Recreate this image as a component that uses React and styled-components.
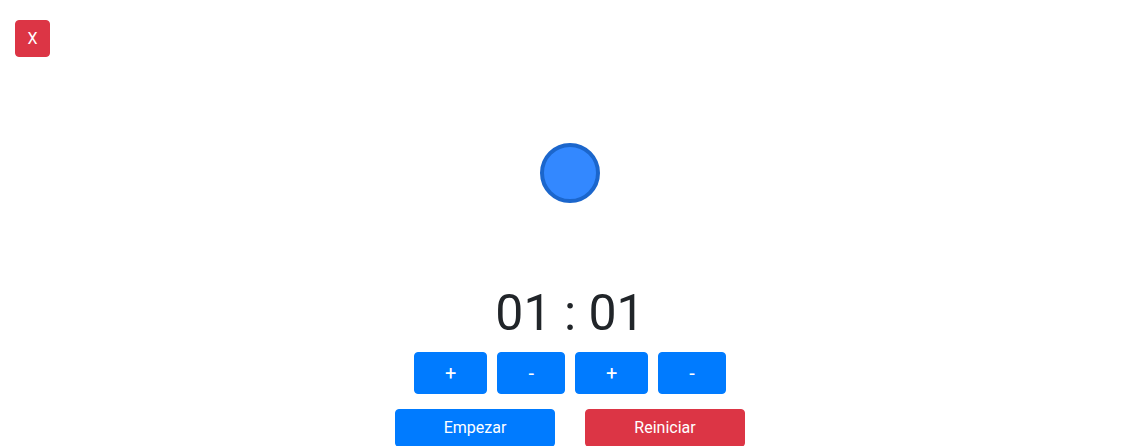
import React from "react";
import styled, { createGlobalStyle } from "styled-components";

const Global = createGlobalStyle`
  html, body { margin: 0; padding: 0; background: #fff; }
  body { font-family: Roboto, "Liberation Sans", Arial, sans-serif; color: #212529; }
`;

const Page = styled.div`
  width: 1140px;
  height: 446px;
  overflow: hidden;
  padding: 20px 15px 0;
  box-sizing: border-box;
  display: flex;
  flex-direction: column;
`;

const Btn = styled.button`
  font-family: Roboto, "Liberation Sans", Arial, sans-serif;
  border: 1px solid ${(p) => (p.$variant === "danger" ? "#dc3545" : "#007bff")};
  background: ${(p) => (p.$variant === "danger" ? "#dc3545" : "#007bff")};
  color: #fff;
  border-radius: 4px;
  cursor: pointer;
  box-sizing: border-box;
  margin: 0;
`;

const CloseBtn = styled(Btn)`
  align-self: flex-start;
  width: 35px;
  height: 37px;
  padding: 0;
  font-size: 16px;
  line-height: 35px;
`;

const Stage = styled.div`
  display: flex;
  justify-content: center;
  margin-top: 86px;
  margin-left: -15px;
  margin-right: -15px;
`;

const Dot = styled.div`
  width: 60px;
  height: 60px;
  box-sizing: border-box;
  border-radius: 50%;
  background: #3388ff;
  border: 4px solid #1b66cc;
`;

const Controls = styled.div`
  display: flex;
  flex-direction: column;
  align-items: center;
  margin-left: -15px;
  margin-right: -15px;
  margin-top: 80px;
`;

const Time = styled.div`
  font-size: 50px;
  line-height: 60px;
  font-weight: 400;
  color: #212529;
`;

const AdjustRow = styled.div`
  display: flex;
  gap: 10px;
  margin-top: 9px;
`;

const AdjustBtn = styled(Btn)`
  height: 42px;
  padding: 0 30px;
  font-size: 20px;
  line-height: 40px;
`;

const ActionRow = styled.div`
  display: flex;
  gap: 30px;
  margin-top: 15px;
`;

const ActionBtn = styled(Btn)`
  width: 160px;
  height: 38px;
  padding: 0;
  font-size: 16px;
  line-height: 36px;
`;

export default function App() {
  return (
    <>
      <Global />
      <Page>
        <CloseBtn $variant="danger">X</CloseBtn>
        <Stage>
          <Dot />
        </Stage>
        <Controls>
          <Time>01 : 01</Time>
          <AdjustRow>
            <AdjustBtn>+</AdjustBtn>
            <AdjustBtn>-</AdjustBtn>
            <AdjustBtn>+</AdjustBtn>
            <AdjustBtn>-</AdjustBtn>
          </AdjustRow>
          <ActionRow>
            <ActionBtn>Empezar</ActionBtn>
            <ActionBtn $variant="danger">Reiniciar</ActionBtn>
          </ActionRow>
        </Controls>
      </Page>
    </>
  );
}
